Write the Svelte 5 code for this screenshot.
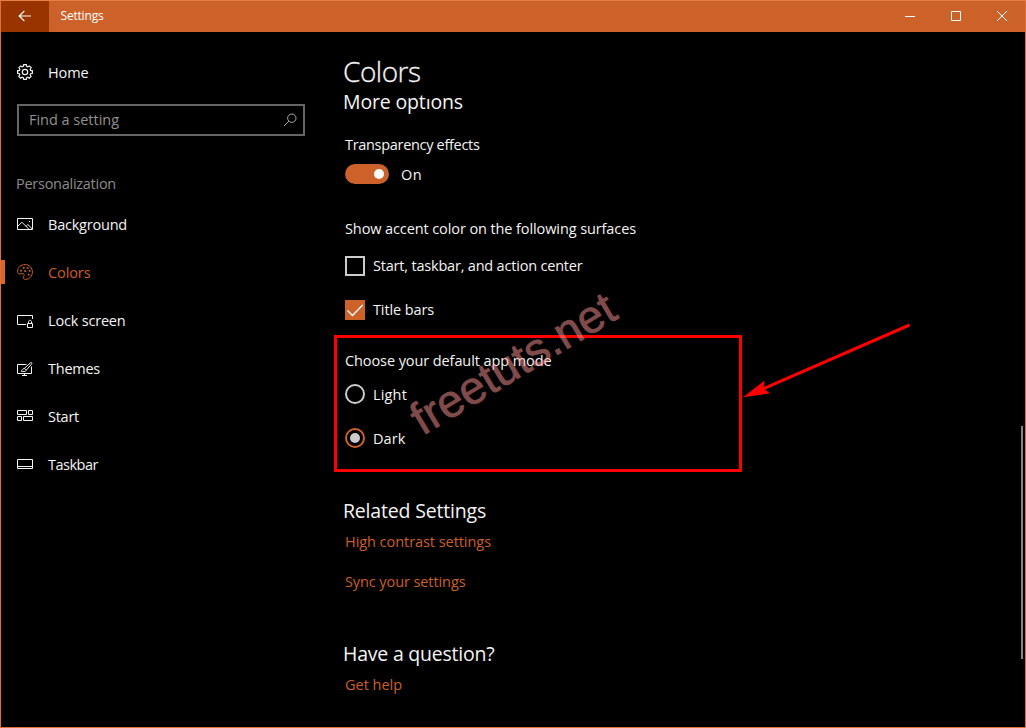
<script>
  const nav = [
    { id: 'background', label: 'Background', width: 79 },
    { id: 'colors', label: 'Colors', width: 42.5 },
    { id: 'lock', label: 'Lock screen', width: 77.5 },
    { id: 'themes', label: 'Themes', width: 52 },
    { id: 'start', label: 'Start', width: 31 },
    { id: 'taskbar', label: 'Taskbar', width: 50 }
  ];
  const active = 'colors';

  let transparency = $state(true);
  let startAccent = $state(false);
  let titleAccent = $state(true);
  let mode = $state('Dark');

  // Tracks a label out (or in) so that it fills the given advance width.
  function fit(node, width) {
    const natural = node.getBoundingClientRect().width;
    node.style.letterSpacing = `${(width - natural) / node.textContent.length}px`;
  }
</script>

<div class="window">
  <header class="titlebar">
    <button class="back" aria-label="Back">
      <svg width="14" height="12" viewBox="0 0 14 12"><path d="M13 6H1.3M6.4 .8L1.2 6l5.2 5.2" /></svg>
    </button>
    <div class="title"><span use:fit={43}>Settings</span></div>
    <div class="controls">
      <button aria-label="Minimize"><svg width="10" height="10"><path d="M0 5.5h10" /></svg></button>
      <button aria-label="Maximize"><svg width="10" height="10"><path d="M.5 .5h9v9h-9z" /></svg></button>
      <button aria-label="Close"><svg width="10" height="10"><path d="M0 0l10 10M10 0L0 10" /></svg></button>
    </div>
  </header>

  <div class="body">
    <aside>
      <div class="item home">
        <svg class="icon" viewBox="0 0 16 16">
          <path d="M6.7 .6h2.6l.4 1.8 1.1.5 1.6-1 1.8 1.8-1 1.6.4 1.1 1.8.4v2.5l-1.8.4-.5 1.1 1 1.6-1.8 1.8-1.5-1-1.1.5-.4 1.7H6.7l-.4-1.7-1.1-.5-1.6 1-1.8-1.8 1-1.6-.4-1.1-1.8-.4V6.8l1.8-.4.5-1.1-1-1.6 1.8-1.8 1.5 1 1.1-.5z" />
          <circle cx="8" cy="8" r="2.7" />
        </svg>
        <span class="label"><span use:fit={40.5}>Home</span></span>
      </div>

      <div class="search">
        <span use:fit={90}>Find a setting</span>
        <svg width="14" height="14" viewBox="0 0 14 14"><circle cx="8.8" cy="5.2" r="4.2" /><path d="M5.8 8.2L1 13" /></svg>
      </div>

      <h3><span use:fit={100}>Personalization</span></h3>

      <nav>
        {#each nav as entry}
          <div class="item" class:active={entry.id === active}>
            <svg class="icon" viewBox="0 0 16 16">
              {#if entry.id === 'background'}
                <path d="M.5 2.5h15v11H.5z" />
                <path d="M.7 10.4l4.2-4.2 7.2 7.2M9.1 10.3l1.8-1.8 4.5 4.6" />
                <path d="M12 5.5h1" />
              {:else if entry.id === 'colors'}
                <path d="M.6 7.2C.7 3.2 4 .6 8 .6c4.200 0 7.400 3.200 7.400 7.400S12.300 15.400 8.700 15.400c-1.700 0-2.600-.8-2.300-2.100.3-1.300 1-1.900.7-2.900-.4-1.200-1.900-1.200-3-.7C2.300 10.500.5 9.800.6 7.200z" />
                <g class="dots"><path d="M3.200 5.700h1.700v1.700H3.200zM5.800 3.100h1.700v1.700H5.800zM9.700 3h1.700v1.700H9.700zM11.900 6h1.700v1.700h-1.700zM10.900 9.700h1.700v1.700h-1.700zM7.300 6.300H9V8H7.300z" /></g>
              {:else if entry.id === 'lock'}
                <path d="M15.500 7V3.500H.5v9h8.500M10.500 11.500h5v4h-5zM11.500 11.500V9.800c0-2 3-2 3 0v1.700" />
              {:else if entry.id === 'themes'}
                <path d="M9.500 4.500H.5v9h14v-7M5 15.500h5M7.500 13.500v2" />
                <path d="M7.200 8.500l6.300-5.700c.9-.8 1.900.2 1.200 1.100L9 10.400M7.200 8.500c-2 .1-1.500 2-3 2.600 1.900.8 4.500.8 4.800-.7 0-.9-.8-1.800-1.800-1.900z" />
              {:else if entry.id === 'start'}
                <path d="M.5 2.500h9v4h-9zM11.500 2.500h4v4h-4zM.5 8.500h4v4h-4zM6.500 8.500h9v4h-9z" />
              {:else}
                <path d="M.5 3.500h15v9H.5zM.5 10.500h15" />
              {/if}
            </svg>
            <span class="label"><span use:fit={entry.width}>{entry.label}</span></span>
          </div>
        {/each}
      </nav>
    </aside>

    <main>
      <h1><span use:fit={77.5}>Colors</span></h1>
      <h2><span use:fit={120}>More opt<span class="cut">i</span>ons</span></h2>

      <p class="caption transparency"><span use:fit={134.5}>Transparency effects</span></p>
      <div class="row">
        <button class="switch" class:on={transparency} aria-label="Transparency effects" onclick={() => (transparency = !transparency)}><i></i></button>
        <span class="label" use:fit={21}>{transparency ? 'On' : 'Off'}</span>
      </div>

      <p class="caption accent"><span use:fit={291}>Show accent color on the following surfaces</span></p>
      <div class="options">
        <button class="row" onclick={() => (startAccent = !startAccent)}>
          <i class="box" class:checked={startAccent}></i>
          <span class="label" use:fit={209.5}>Start, taskbar, and action center</span>
        </button>
        <button class="row" onclick={() => (titleAccent = !titleAccent)}>
          <i class="box" class:checked={titleAccent}>
            {#if titleAccent}<svg width="20" height="20"><path d="M2.500 10.500l5 5L17.700 5" /></svg>{/if}
          </i>
          <span class="label" use:fit={61}>Title bars</span>
        </button>
      </div>

      <p class="caption mode"><span use:fit={206.500}>Choose your default app mode</span></p>
      <div class="options low">
        {#each [['Light', 34], ['Dark', 32.5]] as [name, width]}
          <button class="row" onclick={() => (mode = name)}>
            <i class="radio" class:picked={mode === name}></i>
            <span class="label" use:fit={width}>{name}</span>
          </button>
        {/each}
      </div>

      <h2 class="related"><span use:fit={143}>Related Settings</span></h2>
      <a href="#contrast"><span use:fit={146}>High contrast settings</span></a>
      <a class="sync" href="#sync"><span use:fit={120.5}>Sync your settings</span></a>

      <h2 class="question"><span use:fit={151.5}>Have a question?</span></h2>
      <a href="#help"><span use:fit={57}>Get help</span></a>
    </main>
  </div>

  <div class="scrollbar"></div>

  <svg class="annotation" width="1026" height="728" viewBox="0 0 1026 728">
    <rect x="335.500" y="336.500" width="405" height="134" />
    <path class="shaft" d="M763 388.800L909.500 325" />
    <path class="head" d="M743 397.200L764.500 380.500L763.500 388.300L770 393.300Z" />
    <text transform="translate(422.500 436) rotate(-31)" textLength="230">freetuts.net</text>
  </svg>
</div>

<style>
  :global(body) { margin: 0; background: #000; }
  .window {
    position: relative;
    box-sizing: border-box;
    width: 1026px;
    height: 728px;
    border: 1px solid #e0703a;
    border-top-color: #e48048;
    background: #000;
    color: #f4f4f4;
    font: 14.500px/20px "Open Sans", "Noto Sans", sans-serif;
    overflow: hidden;
  }
  svg { fill: none; stroke: currentColor; flex: none; }
  button { margin: 0; padding: 0; border: 0; background: none; color: inherit; font: inherit; }
  h1, h2, h3, p { margin: 0; font-weight: 400; white-space: nowrap; }
  i { display: block; box-sizing: border-box; flex: none; }
  span { white-space: nowrap; }

  .titlebar { display: flex; height: 31px; background: #cc612a; color: #fff; }
  .back { display: flex; align-items: center; justify-content: center; width: 48px; height: 31px; padding-bottom: 1px; background: #993300; }
  .back svg { stroke-width: 1.200; }
  .title { padding-left: 11.500px; flex: 1; font-size: 12px; line-height: 30px; }
  .controls { display: flex; }
  .controls button { display: flex; align-items: center; justify-content: center; width: 46px; height: 30px; }

  .body { display: flex; height: 695px; }
  aside { width: 304px; padding-top: 16px; flex: none; }
  .item { position: relative; display: flex; align-items: center; height: 48px; padding-left: 16px; gap: 15px; }
  .icon { width: 16px; height: 16px; }
  .home .icon { stroke-width: 1.200; }
  .item .label { padding-top: 1px; }
  .item.active { color: #cc5f28; }
  .item.active::before { content: ""; position: absolute; left: -1px; top: 12px; width: 5px; height: 24px; background: #d8672f; }
  .dots { fill: currentColor; stroke: none; }
  .search {
    display: flex; align-items: center; justify-content: space-between;
    box-sizing: border-box; height: 32px; margin: 8px 0 0 16px; padding: 0 6px 0 10px;
    border: 2px solid #666; color: #919191;
  }
  .search svg { stroke: #aaa; }
  h3 { margin: 38px 0 6px 15px; font-size: 14.500px; line-height: 20px; color: #8c8c8c; }

  main { display: flex; flex-direction: column; align-items: flex-start; padding: 21px 0 0 40px; flex: 1; }
  h1 { margin: 0 0 1px -2px; font-size: 28px; line-height: 36px; font-weight: 300; -webkit-text-stroke: .3px currentColor; }
  h2 { margin-left: -2px; font-size: 19.500px; line-height: 24px; }
  .cut { display: inline-block; clip-path: inset(9px 0 0 0); }
  .transparency { margin-top: 21px; }
  .row { display: flex; align-items: center; height: 20px; text-align: left; }
  .transparency + .row { margin-top: 9px; gap: 12px; }
  .transparency + .row .label, .low .label { padding-top: 2px; }
  .switch { width: 44px; height: 20px; border-radius: 10px; background: #555; padding: 5px; }
  .switch i { width: 10px; height: 10px; border-radius: 50%; background: #fff; }
  .switch.on { background: #cc612a; padding-left: 29px; }
  .accent { margin-top: 35px; }
  .options { display: flex; flex-direction: column; gap: 24px; }
  .accent + .options { margin-top: 17px; }
  .options .row { gap: 8px; }
  .box { width: 20px; height: 20px; border: 2px solid #ccc; }
  .box.checked { border: 0; background: #cc612a; color: #fff; }
  .box svg { display: block; stroke-width: 1.300; }
  .mode { margin-top: 31px; }
  .mode + .options { margin-top: 13px; }
  .radio { display: grid; place-items: center; width: 20px; height: 20px; border: 2px solid #ccc; border-radius: 50%; }
  .radio.picked { border-color: #cc612a; }
  .radio.picked::after { content: ""; width: 10px; height: 10px; border-radius: 50%; background: #ccc; }
  .related { margin-top: 51px; }
  a { margin-top: 9px; color: #cc5f28; text-decoration: none; }
  a.sync { margin-top: 20px; }
  .question { margin-top: 50px; }

  .scrollbar { position: absolute; left: 1020px; top: 425px; width: 2px; height: 233px; background: #858585; }
  .annotation { position: absolute; left: -1px; top: -1px; pointer-events: none; }
  .annotation rect, .shaft { stroke: #fe0000; stroke-width: 3; }
  .head { fill: #fe0000; stroke: none; }
  .annotation text {
    font: 46px "Liberation Sans", Arial, sans-serif;
    fill: #ff9696; stroke: #ff9696; stroke-width: .7; opacity: .5;
  }
</style>
